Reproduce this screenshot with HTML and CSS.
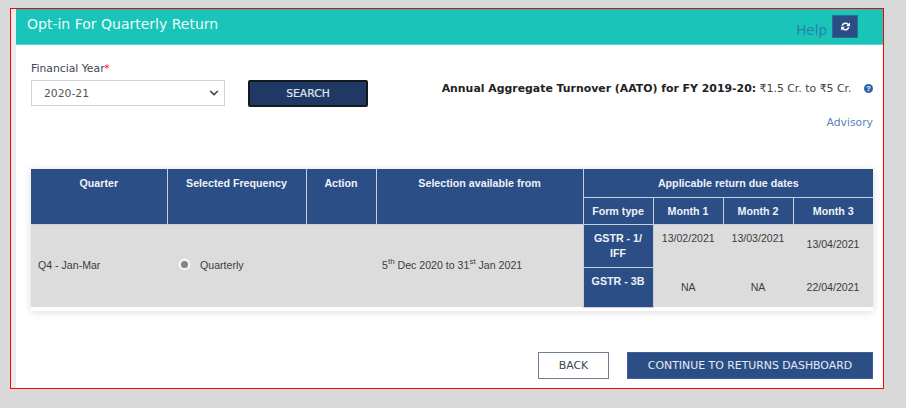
FILE: index.html
```html
<!DOCTYPE html>
<html lang="en">
<head>
<meta charset="utf-8">
<title>Opt-in For Quarterly Return</title>
<link rel="stylesheet" href="styles.css">
</head>
<body>
<div class="frame">
  <main class="panel">
    <header class="banner">
      <h1 class="banner-title">Opt-in For Quarterly Return</h1>
      <div class="banner-tools">
        <a class="help-link">Help</a>
        <button class="refresh-btn" aria-label="Refresh">
          <svg width="11" height="11" viewBox="0 0 12 12"><path d="M1.6 5.2A4.5 4.5 0 0 1 9.3 3L10.8 1.6V5.6H6.8L8.2 4.2A3 3 0 0 0 3.3 5.2Z" fill="#fff"/><path d="M10.4 6.8A4.5 4.5 0 0 1 2.7 9L1.2 10.4V6.4H5.2L3.8 7.8A3 3 0 0 0 8.7 6.8Z" fill="#fff"/></svg>
        </button>
      </div>
    </header>
    <section class="filters">
      <div class="field">
        <label class="field-label">Financial Year<span class="req">*</span></label>
        <div class="select-box">
          <span>2020-21</span>
          <svg class="chev" width="10" height="6" viewBox="0 0 11 7"><path d="M1 1.2 5.5 5.4 10 1.2" fill="none" stroke="#444" stroke-width="1.9"/></svg>
        </div>
      </div>
      <button class="search-btn">SEARCH</button>
      <div class="aato">
        <div class="aato-line">
          <b>Annual Aggregate Turnover (AATO) for FY 2019-20:</b> ₹1.5 Cr. to ₹5 Cr.
          <svg class="info" width="9" height="9" viewBox="0 0 10 10"><circle cx="5" cy="5" r="5" fill="#2c66a8"/><text x="5" y="8" text-anchor="middle" class="info-q">?</text></svg>
        </div>
        <a class="advisory">Advisory</a>
      </div>
    </section>
    <div class="table-card">
      <table class="returns">
        <colgroup>
          <col class="c1"><col class="c2"><col class="c3"><col class="c4"><col class="c5"><col class="c6"><col class="c7"><col class="c8">
        </colgroup>
        <thead>
          <tr class="h1">
            <th rowspan="2" class="top">Quarter</th>
            <th rowspan="2" class="top">Selected Frequency</th>
            <th rowspan="2" class="top">Action</th>
            <th rowspan="2" class="top">Selection available from</th>
            <th colspan="4">Applicable return due dates</th>
          </tr>
          <tr class="h2">
            <th>Form type</th><th>Month 1</th><th>Month 2</th><th>Month 3</th>
          </tr>
        </thead>
        <tbody>
          <tr class="r1">
            <td rowspan="2" class="left">Q4 - Jan-Mar</td>
            <td rowspan="2" class="freq-cell"><span class="freq"><span class="radio"></span>Quarterly</span></td>
            <td rowspan="2"></td>
            <td rowspan="2" class="avail">5<sup>th</sup> Dec 2020 to 31<sup>st</sup> Jan 2021</td>
            <th class="form">GSTR - 1/<br>IFF</th>
            <td class="date top">13/02/2021</td>
            <td class="date top">13/03/2021</td>
            <td class="date mid">13/04/2021</td>
          </tr>
          <tr class="r2">
            <th class="form">GSTR - 3B</th>
            <td class="date">NA</td>
            <td class="date">NA</td>
            <td class="date">22/04/2021</td>
          </tr>
        </tbody>
      </table>
    </div>
    <footer class="actions">
      <button class="back-btn">BACK</button>
      <button class="continue-btn">CONTINUE TO RETURNS DASHBOARD</button>
    </footer>
  </main>
</div>
</body>
</html>
```
FILE: styles.css
```css
* { box-sizing: border-box; }
html, body { margin: 0; height: 100%; }
body {
  background: #d9d9d9;
  padding: 8px 22px 0 10px;
  font-family: "DejaVu Sans", Verdana, sans-serif;
  overflow: hidden;
}
.frame {
  height: 381px;
  border: 1px solid #f00;
  padding-left: 5px;
  background: #ececec;
}
.panel { background: #fff; height: 100%; }
.banner {
  height: 36px;
  background: #19c4b9;
  border-bottom: 1px solid #5fd8d0;
  display: flex;
  justify-content: space-between;
  padding: 0 0 0 11px;
}
.banner-title {
  margin: 7px 0 0;
  font-size: 14px;
  line-height: 16px;
  font-weight: 400;
  color: #eafaf8;
}
.banner-tools { display: flex; align-items: flex-start; padding: 6px 25px 0 0; gap: 5px; }
.help-link { font-size: 13.5px; line-height: 18px; margin-top: 6px; color: #2a7fb0; }
.refresh-btn {
  width: 26px; height: 23px; padding: 0; border: 1px solid #2b6c8f;
  background: #2c4e86; display: flex; align-items: center; justify-content: center;
}
.filters {
  display: flex;
  align-items: flex-start;
  padding: 17px 10px 0 15px;
  height: 124px;
}
.field { width: 194px; }
.field-label { display: block; font-size: 10.8px; line-height: 14px; color: #3a4450; height: 18px; }
.req { color: #f00; font-size: 10px; }
.select-box {
  height: 26px; border: 1px solid #d3d3d3; background: #fff;
  display: flex; justify-content: space-between; align-items: center;
  padding: 0 5px 0 12px; font-size: 10.8px; color: #555;
}
.search-btn {
  margin: 18px 0 0 23px;
  width: 120px; height: 27px;
  background: #1f3864; color: #dfe5ee;
  border: 2px solid #15181f; border-radius: 2px;
  font: 400 10.8px "DejaVu Sans", Verdana, sans-serif;
  -webkit-text-stroke: 0.2px #dfe5ee;
}
.aato { margin-left: auto; padding-top: 20px; text-align: right; font-size: 10.9px; color: #444; }
.aato-line { line-height: 14px; height: 34px; white-space: nowrap; }
.aato-line b { color: #222; }
.info { margin-left: 9px; vertical-align: -1px; }
.info-q { font: 700 8px "Liberation Sans", sans-serif; fill: #fff; }
.advisory { font-size: 10.8px; line-height: 14px; color: #5c7fb5; }
.table-card {
  margin: 0 10px 0 15px;
  padding-bottom: 3px;
  background: #fff;
  box-shadow: 0 1px 8px rgba(0,0,0,.14);
}
.returns {
  width: 842px;
  table-layout: fixed;
  border-collapse: collapse;
  font: 10.6px "Liberation Sans", Arial, sans-serif;
  color: #3c3c3c;
}
.c1 { width: 136px; } .c2 { width: 139px; } .c3 { width: 70px; } .c4 { width: 207px; }
.c5 { width: 70px; } .c6 { width: 70px; } .c7 { width: 70px; } .c8 { width: 80px; }
.returns th {
  background: #2c4e86; color: #eef2f7; font-weight: 700; text-align: center;
  border: 1px solid #c9d0db; padding: 0 2px; font-size: 10.7px;
}
.returns thead th { border-top: 0; }
.returns thead th:first-child { border-left: 0; }
.returns thead th:last-child { border-right: 0; }
.returns th.top { vertical-align: top; padding-top: 8px; }
.returns tr.h1 { height: 28px; }
.returns tr.h2 { height: 27px; }
.returns tr.r1 { height: 43px; }
.returns tr.r2 { height: 40px; }
.returns td { background: #dcdcdc; padding: 0; text-align: center; }
.returns td.left { text-align: left; padding: 0 0 2px 7px; }
.returns td.avail { text-align: left; padding: 0 0 2px 6px; }
.returns td.freq-cell { padding-bottom: 2px; }
.returns td.top { vertical-align: top; padding-top: 7px; }
.returns td.mid { vertical-align: top; padding-top: 13px; }
.returns th.form { padding: 6px 2px 0; line-height: 15px; vertical-align: top; border-bottom: 1px solid #c9d0db; border-left: 1px solid #c9d0db; }
.returns .r2 .form { padding-top: 6px; }
sup { font-size: 8px; line-height: 0; }
.freq { display: flex; align-items: center; padding-left: 11px; gap: 9px; }
.radio {
  width: 13px; height: 13px; border-radius: 50%;
  background: #858585; border: 3px solid #f1f1f1;
  box-shadow: 0 0 1px #bbb;
}
.actions {
  display: flex; justify-content: flex-end; gap: 18px;
  padding: 41px 10px 0 0;
}
.back-btn, .continue-btn {
  height: 27px; font: 400 10.9px "DejaVu Sans", Verdana, sans-serif; padding: 0;
}
.back-btn { width: 71px; background: #fff; border: 1px solid #6f7f96; color: #444; }
.continue-btn { width: 246px; background: #2c4e86; border: 1px solid #3f5f95; color: #e6ebf3; }
```
